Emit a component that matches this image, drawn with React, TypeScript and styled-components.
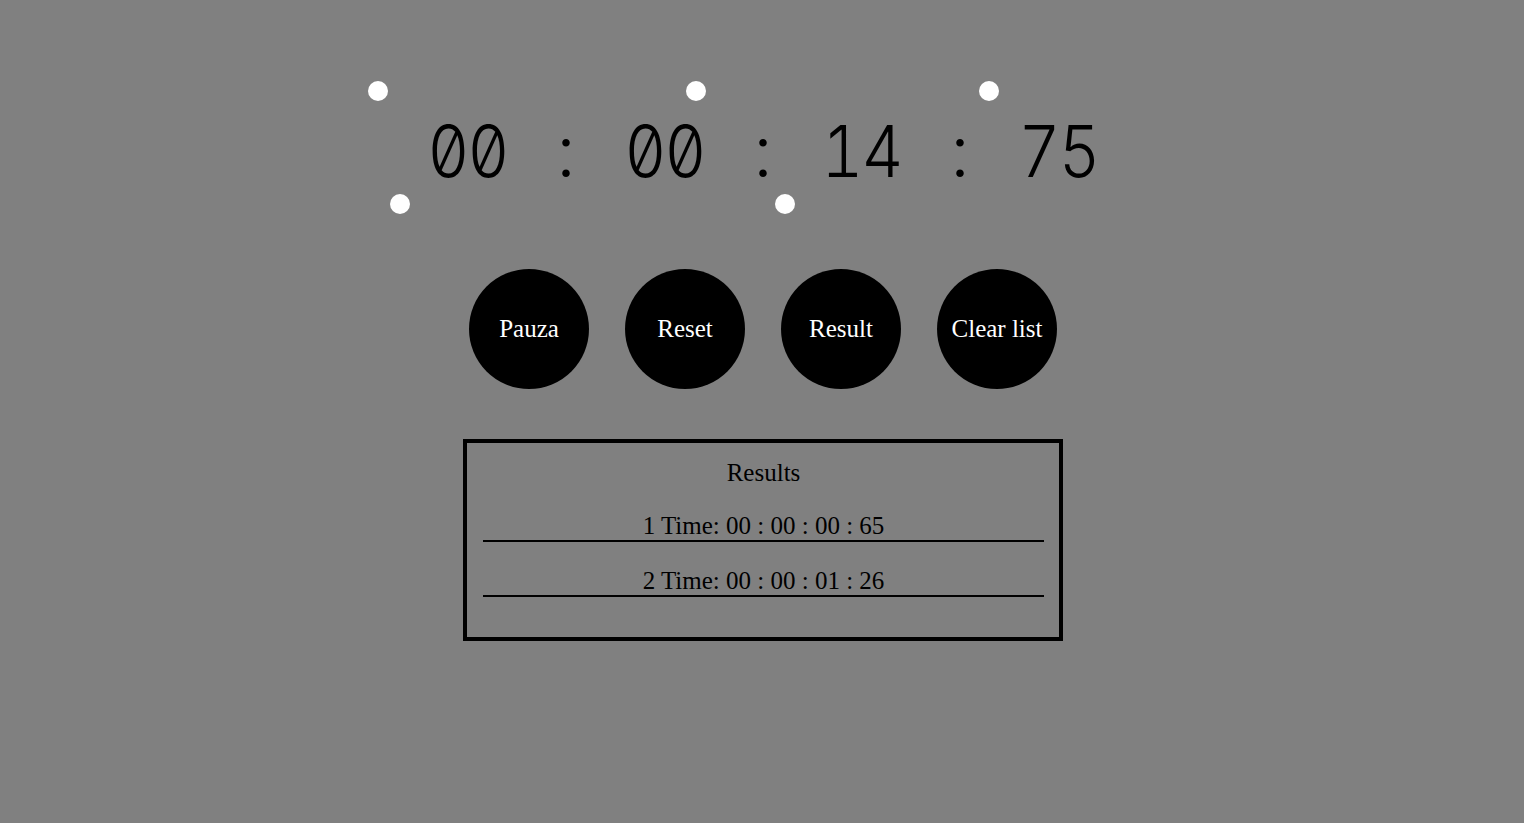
import React from "react";
import styled, { createGlobalStyle } from "styled-components";

const Global = createGlobalStyle`
  html, body {
    margin: 0;
    padding: 0;
    background: #808080;
  }
  body {
    font-family: "Liberation Serif", "Times New Roman", serif;
    min-height: 823px;
  }
`;

const Page = styled.main`
  display: flex;
  flex-direction: column;
  align-items: center;
  padding-top: 60px;
  padding-left: 2px;
`;

const TimerWrap = styled.div`
  position: relative;
  width: 800px;
  padding-top: 55px;
  display: flex;
  justify-content: center;
`;

const TimerRow = styled.div`
  display: grid;
  grid-template-columns: repeat(7, 98.5px);
  justify-items: center;
  font-family: Inter, "DejaVu Sans", sans-serif;
  font-weight: 300;
  font-size: 72px;
  line-height: 72px;
  font-feature-settings: "tnum" 1, "zero" 1;
  font-variant-numeric: tabular-nums slashed-zero;
  color: #000;
`;

const Segment = styled.span<{ $colon?: boolean }>`
  display: inline-block;
  white-space: pre;
  letter-spacing: ${(p) => (p.$colon ? "0" : "-2px")};
  transform: scaleX(${(p) => (p.$colon ? 1 : 0.9)});
`;

const Dot = styled.span<{ $x: number; $y: number }>`
  position: absolute;
  left: ${(p) => p.$x}px;
  top: ${(p) => p.$y}px;
  width: 20px;
  height: 20px;
  border-radius: 50%;
  background: #fff;
`;

const Buttons = styled.div`
  display: flex;
  gap: 36px;
  margin-top: 82px;
`;

const RoundButton = styled.button`
  width: 120px;
  height: 120px;
  border-radius: 50%;
  border: none;
  padding: 0;
  background: #000;
  color: #fff;
  font-family: "Liberation Serif", "Times New Roman", serif;
  font-size: 25px;
  cursor: pointer;
`;

const ResultsBox = styled.section`
  box-sizing: border-box;
  width: 600px;
  margin-top: 50px;
  border: 4px solid #000;
  padding: 15px 15px 40px 16px;
  display: flex;
  flex-direction: column;
`;

const ResultsTitle = styled.div`
  text-align: center;
  font-size: 25px;
  line-height: 29px;
  color: #000;
`;

const ResultRow = styled.div`
  margin-top: 24px;
  text-align: center;
  font-size: 25px;
  line-height: 29px;
  color: #000;
  border-bottom: 2px solid #000;
`;

const dots = [
  { x: 5, y: 21 },
  { x: 323, y: 21 },
  { x: 616, y: 21 },
  { x: 27, y: 134 },
  { x: 412, y: 134 },
];

const timeParts = ["00", ":", "00", ":", "14", ":", "75"];
const results = ["00 : 00 : 00 : 65", "00 : 00 : 01 : 26"];

export default function App() {
  return (
    <>
      <Global />
      <Page>
        <TimerWrap>
          {dots.map((d, i) => (
            <Dot key={i} $x={d.x} $y={d.y} />
          ))}
          <TimerRow>
            {timeParts.map((p, i) => (
              <Segment key={i} $colon={p === ":"}>
                {p}
              </Segment>
            ))}
          </TimerRow>
        </TimerWrap>
        <Buttons>
          <RoundButton>Pauza</RoundButton>
          <RoundButton>Reset</RoundButton>
          <RoundButton>Result</RoundButton>
          <RoundButton>Clear list</RoundButton>
        </Buttons>
        <ResultsBox>
          <ResultsTitle>Results</ResultsTitle>
          {results.map((r, i) => (
            <ResultRow key={i}>
              {i + 1} Time: {r}
            </ResultRow>
          ))}
        </ResultsBox>
      </Page>
    </>
  );
}
